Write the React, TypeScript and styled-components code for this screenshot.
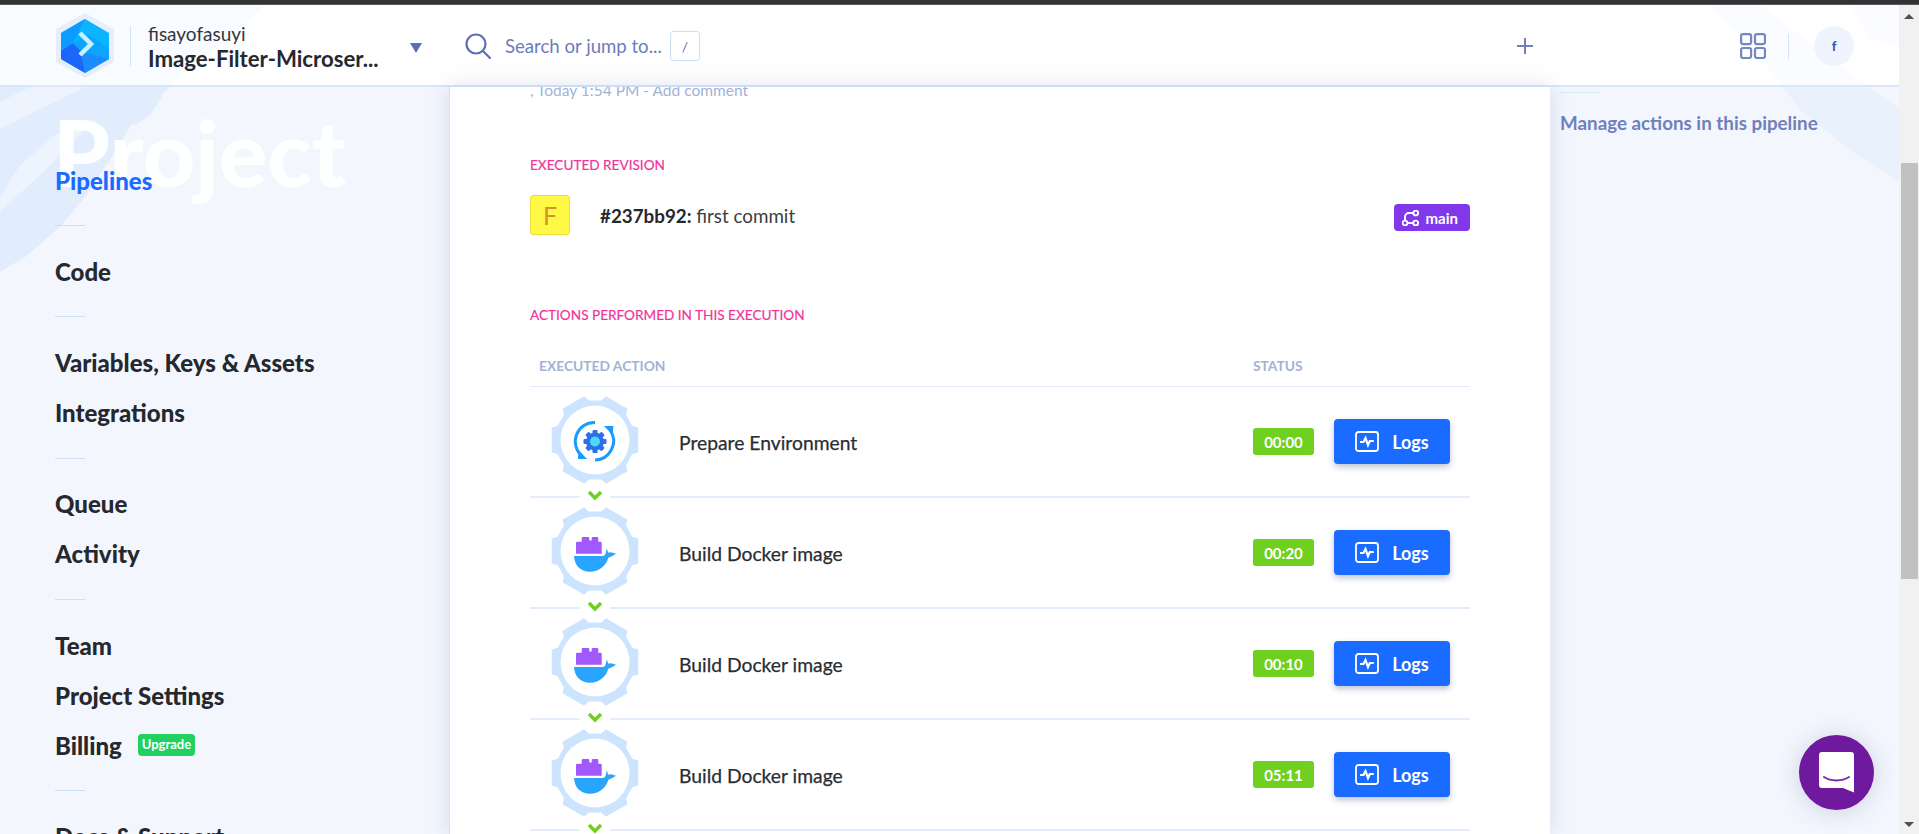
import React from "react";
import styled, { createGlobalStyle } from "styled-components";

const GlobalStyle = createGlobalStyle`
  html, body {
    margin: 0;
    height: 100%;
    overflow: hidden;
    font-family: "Lato", "Liberation Sans", sans-serif;
  }
  * { box-sizing: border-box; }
`;

const gearPath = () => {
  const pts: string[] = [];
  const rad = (d: number) => (d * Math.PI) / 180;
  for (let i = 0; i < 6; i++) {
    const a = i * 60;
    [
      [a - 21, 40],
      [a - 16, 45],
      [a + 16, 45],
      [a + 21, 40],
    ].forEach(([d, r]) => {
      pts.push(`${(45 + r * Math.cos(rad(d))).toFixed(1)},${(45 + r * Math.sin(rad(d))).toFixed(1)}`);
    });
  }
  return pts.join(" ");
};

const GEAR_POINTS = gearPath();

const Logo = () => (
  <svg width="60" height="66" viewBox="0 0 60 66">
    <polygon points="30,0 59,16 59,49 30,65 1,49 1,16" fill="#e6edfb" />
    <polygon points="30,6 54,20 54,46 30,60 6,46 6,20" fill="#0ab4ff" />
    <polygon points="30,6 6,20 6,38 18,30" fill="#0a9dff" />
    <polygon points="6,46 6,38 18,30 26,38 30,60" fill="#1c66fb" />
    <polygon points="26,38 54,46 30,60" fill="#1b8cff" />
    <polygon points="18,30 26,38 54,46 54,36 34,22" fill="#0ca4ff" />
    <polyline points="25,20 36,31 25,42" fill="none" stroke="#c9f1ff" strokeWidth="4.5" />
  </svg>
);

const SearchIcon = () => (
  <svg width="26" height="26" viewBox="0 0 26 26" fill="none" stroke="#5c6fb3" strokeWidth="2.2">
    <circle cx="11" cy="11" r="9.5" />
    <line x1="18" y1="18" x2="25" y2="25" strokeLinecap="round" />
  </svg>
);

const PlusIcon = () => (
  <svg width="16" height="16" viewBox="0 0 16 16" stroke="#6f80bb" strokeWidth="2">
    <line x1="8" y1="0" x2="8" y2="16" />
    <line x1="0" y1="8" x2="16" y2="8" />
  </svg>
);

const GridIcon = () => (
  <svg width="26" height="26" viewBox="0 0 26 26" fill="none" stroke="#7487bf" strokeWidth="2.2">
    <rect x="1.1" y="1.1" width="10" height="10" rx="2" />
    <rect x="15" y="1.1" width="10" height="10" rx="2" />
    <rect x="1.1" y="15" width="10" height="10" rx="2" />
    <rect x="15" y="15" width="10" height="10" rx="2" />
  </svg>
);

const BranchIcon = () => (
  <svg width="17" height="16" viewBox="0 0 17 16" fill="none" stroke="#fff" strokeWidth="1.9">
    <circle cx="13.7" cy="3" r="2.4" />
    <circle cx="3" cy="13" r="2.4" />
    <circle cx="13.7" cy="13" r="2.4" />
    <path d="M3 10.600V7a4 4 0 0 1 4-4h4.300" />
    <line x1="5.400" y1="13" x2="11.300" y2="13" />
  </svg>
);

const PulseIcon = () => (
  <svg width="24" height="21" viewBox="0 0 24 21" fill="none" stroke="#fff">
    <rect x="1" y="1" width="22" height="19" rx="2.5" strokeWidth="1.800" />
    <path d="M5 11h3.500l2-4 2.500 7 1.800-4h4" strokeWidth="2.200" />
  </svg>
);

const PrepareGlyph = () => (
  <g>
    <path d="M45 27.500A19 19 0 0 0 32 61" fill="none" stroke="#1a9bff" strokeWidth="3" />
    <path d="M45 65A19 19 0 0 0 60 35" fill="none" stroke="#1a9bff" strokeWidth="3" />
    <polygon points="28,64 37,64 28.300,55" fill="#1a9bff" />
    <polygon points="54,31 63.500,31 62.500,40" fill="#1a9bff" />
    <circle cx="45" cy="46.500" r="9" fill="#2c6fe8" />
    <g fill="#2c6fe8">
      {[0, 45, 90, 135].map((a) => (
        <rect key={a} x="42.500" y="35" width="5" height="23" rx="1" transform={`rotate(${a} 45 46.500)`} />
      ))}
    </g>
    <circle cx="45" cy="46.500" r="5" fill="#4fd8f5" />
  </g>
);

const DockerGlyph = () => (
  <g>
    <path
      d="M26 47.700V37q0-1.300 1.300-1.300H31.700V32q0-1 1-1H38.300q1 0 1 1V34.500H41.700V32q0-1 1-1H47.300q1 0 1 1V35.700H50.700q1 0 1 1V47.700z"
      fill="#a259fb"
    />
    <path
      d="M24 50H53C55 50 56 48 56.700 42.300L58.300 46.700C60 45.500 63 46.500 66 47.700C63 50 60 51 58.300 51.700C56 60 49 65.700 40 65.700C30 65.700 24.500 59 24 50z"
      fill="#2aa5ff"
    />
  </g>
);

const ACTIONS = [
  { name: "Prepare Environment", time: "00:00", glyph: <PrepareGlyph /> },
  { name: "Build Docker image", time: "00:20", glyph: <DockerGlyph /> },
  { name: "Build Docker image", time: "00:10", glyph: <DockerGlyph /> },
  { name: "Build Docker image", time: "05:11", glyph: <DockerGlyph /> },
];

const NAV_GROUPS = [
  ["Pipelines"],
  ["Code"],
  ["Variables, Keys & Assets", "Integrations"],
  ["Queue", "Activity"],
  ["Team", "Project Settings", "Billing"],
  ["Docs & Support"],
];

const App = () => {
  return (
    <>
      <GlobalStyle />
      <Shell>
        <TopStrip />
        <Frame>
          <Page>
            <Header>
              <BackArt viewBox="0 0 1899 80" preserveAspectRatio="none">
                <polygon points="0,0 266,0 220,40 170,80 0,80" fill="#f8fbff" />
                <polygon points="1710,0 1760,0 1867,80 1783,80" fill="#fafcff" />
                <polygon points="1850,0 1899,0 1899,40 1870,35" fill="#fbfcff" />
              </BackArt>
              <Brand>
                <Logo />
                <HeaderRule />
                <BrandText>
                  <Owner>fisayofasuyi</Owner>
                  <ProjectName>Image-Filter-Microser...</ProjectName>
                </BrandText>
                <Caret />
              </Brand>
              <SearchBox>
                <SearchIcon />
                <SearchText>Search or jump to...</SearchText>
                <Kbd>/</Kbd>
              </SearchBox>
              <HeaderRight>
                <AddButton>
                  <PlusIcon />
                </AddButton>
                <GridIcon />
                <HeaderRuleSmall />
                <UserCircle>f</UserCircle>
              </HeaderRight>
            </Header>
            <Columns>
              <BackArt viewBox="0 0 1899 747" preserveAspectRatio="none">
                <polygon points="0,0 170,0 150,18 130,40 115,65 85,110 60,140 25,170 0,185" fill="#e1edfd" />
                <polygon points="0,15 30,0 85,0 40,22 0,42" fill="#edf4fe" />
                <polygon points="0,110 20,78 55,48 95,32 70,58 40,88 0,125" fill="#edf4fe" />
                <polygon points="125,22 163,8 150,28 135,38" fill="#e1edfd" />
                <polygon points="1783,0 1867,0 1899,21 1899,95 1850,63 1800,23" fill="#e8f1fc" />
              </BackArt>
              <Sidebar>
                <Watermark>Project</Watermark>
                {NAV_GROUPS.map((group, i) => (
                  <React.Fragment key={group[0]}>
                    {i > 0 && <NavRule />}
                    {group.map((item) => (
                      <NavItem key={item} $active={item === "Pipelines"}>
                        {item}
                        {item === "Billing" && <UpgradeBadge>Upgrade</UpgradeBadge>}
                      </NavItem>
                    ))}
                  </React.Fragment>
                ))}
              </Sidebar>
              <Main>
                <CommentLine>, Today 1:54 PM - Add comment</CommentLine>
                <SectionLabel $top={54} $gap={21}>EXECUTED REVISION</SectionLabel>
                <RevisionRow>
                  <CommitAvatar>F</CommitAvatar>
                  <CommitText>
                    <b>#237bb92:</b> first commit
                  </CommitText>
                  <BranchBadge>
                    <BranchIcon />
                    main
                  </BranchBadge>
                </RevisionRow>
                <SectionLabel $top={71} $gap={25}>ACTIONS PERFORMED IN THIS EXECUTION</SectionLabel>
                <TableHead>
                  <HeadCell>EXECUTED ACTION</HeadCell>
                  <StatusCell>STATUS</StatusCell>
                </TableHead>
                {ACTIONS.map((action, i) => (
                  <ActionRow key={i}>
                    <GearBox>
                      <svg width="90" height="90" viewBox="0 0 90 90">
                        <polygon points={GEAR_POINTS} fill="#cce4fd" />
                        <circle cx="45" cy="45" r="34.500" fill="#fff" />
                        {action.glyph}
                      </svg>
                    </GearBox>
                    <ActionName>{action.name}</ActionName>
                    <TimeBadge>{action.time}</TimeBadge>
                    <LogsButton>
                      <PulseIcon />
                      Logs
                    </LogsButton>
                    <Connector>
                      <svg width="16" height="11" viewBox="0 0 16 11">
                        <polyline points="2,2 8,8 14,2" fill="none" stroke="#6fd020" strokeWidth="3.500" />
                      </svg>
                    </Connector>
                  </ActionRow>
                ))}
              </Main>
              <RightPanel>
                <PanelRule />
                <PanelLink>Manage actions in this pipeline</PanelLink>
              </RightPanel>
            </Columns>
            <ChatBubble>
              <svg width="36" height="41" viewBox="0 0 36 41">
                <path d="M3 0h29a3 3 0 0 1 3 3v37.500L24 36H3a3 3 0 0 1-3-3V3a3 3 0 0 1 3-3z" fill="#fff" />
                <path d="M5 25c7 4.500 18 4.500 25 0" fill="none" stroke="#7a2aa8" strokeWidth="2" strokeLinecap="round" />
              </svg>
            </ChatBubble>
          </Page>
          <ScrollTrack>
            <ArrowUp />
            <ThumbArea>
              <Thumb />
            </ThumbArea>
            <ArrowDown />
          </ScrollTrack>
        </Frame>
      </Shell>
    </>
  );
};

export default App;

const Shell = styled.div`
  display: flex;
  flex-direction: column;
  width: 1919px;
  height: 834px;
  overflow: hidden;
`;

const TopStrip = styled.div`
  height: 5px;
  flex: none;
  background: #333333;
  border-bottom: 1px solid #5a5a5a;
`;

const Frame = styled.div`
  display: flex;
  flex: 1;
  min-height: 0;
`;

const Page = styled.div`
  position: relative;
  display: flex;
  flex-direction: column;
  flex: 1;
  min-width: 0;
  background: #f3f6fd;
  overflow: hidden;
`;

const BackArt = styled.svg`
  position: absolute;
  inset: 0;
  z-index: -1;
  width: 100%;
  height: 100%;
`;

const Header = styled.header`
  position: relative;
  isolation: isolate;
  display: flex;
  align-items: center;
  flex: none;
  height: 82px;
  padding: 2px 45px 0 55px;
  background: #fff;
  border-bottom: 2px solid #d9e7fb;
`;

const Brand = styled.div`
  display: flex;
  align-items: center;
  width: 410px;
`;

const HeaderRule = styled.div`
  width: 1px;
  height: 40px;
  margin: 0 17px 0 15px;
  background: #d5e3f8;
`;

const BrandText = styled.div`
  display: flex;
  flex-direction: column;
  gap: 1px;
  width: 262px;
`;

const Owner = styled.div`
  font-size: 19px;
  line-height: 23px;
  color: #33363c;
`;

const ProjectName = styled.div`
  font-size: 22.200px;
  line-height: 25px;
  font-weight: 700;
  color: #25282e;
  white-space: nowrap;
`;

const Caret = styled.div`
  width: 0;
  height: 0;
  margin-top: 4px;
  border-left: 6px solid transparent;
  border-right: 6px solid transparent;
  border-top: 10px solid #5c6fb3;
`;

const SearchBox = styled.div`
  display: flex;
  align-items: center;
`;

const SearchText = styled.span`
  margin: 0 8px 0 14px;
  font-size: 18.600px;
  color: #6b7dbb;
`;

const Kbd = styled.span`
  display: flex;
  align-items: center;
  justify-content: center;
  width: 30px;
  height: 30px;
  font-size: 14px;
  color: #5c6fb3;
  background: #fff;
  border: 1px solid #cdddf8;
  border-radius: 3px;
`;

const HeaderRight = styled.div`
  display: flex;
  align-items: center;
  margin-left: auto;
`;

const AddButton = styled.div`
  display: flex;
  margin-right: 207px;
`;

const HeaderRuleSmall = styled.div`
  width: 1px;
  height: 25px;
  margin: 0 25px 0 22px;
  background: #d5e3f8;
`;

const UserCircle = styled.div`
  display: flex;
  align-items: center;
  justify-content: center;
  width: 40px;
  height: 40px;
  border-radius: 50%;
  font-size: 13px;
  font-weight: 900;
  color: #3d5aa8;
  background: #eff4fe;
`;

const Columns = styled.div`
  position: relative;
  isolation: isolate;
  display: flex;
  flex: 1;
  min-height: 0;
`;

const Sidebar = styled.nav`
  position: relative;
  width: 449px;
  flex: none;
  padding: 68px 0 0 55px;
  overflow: hidden;
`;

const Watermark = styled.div`
  position: absolute;
  left: 53px;
  top: 10px;
  font-size: 91px;
  line-height: 110px;
  font-weight: 900;
  color: rgba(255, 255, 255, 0.92);
`;

const NavItem = styled.div<{ $active?: boolean }>`
  position: relative;
  display: flex;
  align-items: center;
  height: 50px;
  font-size: 24px;
  font-weight: 900;
  white-space: nowrap;
  color: ${(p) => (p.$active ? "#1a6bff" : "#25282e")};
`;

const UpgradeBadge = styled.span`
  margin-left: 16px;
  padding: 0 4px;
  height: 22px;
  line-height: 21px;
  font-size: 13px;
  font-weight: 700;
  color: #fff;
  background: #21d05e;
  border-radius: 4px;
`;

const NavRule = styled.div`
  width: 30px;
  height: 1px;
  margin: 20px 0 20.250px;
  background: #cfdff8;
`;

const Main = styled.main`
  position: relative;
  width: 1101px;
  flex: none;
  padding: 0 80px;
  background: #fff;
  border-left: 1px solid #d9e2f3;
  box-shadow: 0 0 20px rgba(120, 140, 190, 0.25);
  overflow: hidden;
`;

const CommentLine = styled.div`
  margin-top: -9px;
  font-size: 15.500px;
  line-height: 24px;
  color: #9fb3d4;
`;

const SectionLabel = styled.div<{ $top: number; $gap: number }>`
  margin: ${(p) => p.$top}px 0 ${(p) => p.$gap}px;
  font-size: 13.600px;
  line-height: 18px;
  color: #f0359a;
  -webkit-text-stroke: 0.2px #f0359a;
`;

const RevisionRow = styled.div`
  display: flex;
  align-items: center;
  height: 40px;
`;

const CommitAvatar = styled.div`
  display: flex;
  align-items: center;
  justify-content: center;
  width: 40px;
  height: 40px;
  margin-right: 30px;
  font-size: 25px;
  color: #d39526;
  background: #fff945;
  border: 1px solid #e8dd3d;
  border-radius: 3px;
`;

const CommitText = styled.div`
  font-size: 18.800px;
  color: #3a3d42;

  b {
    font-weight: 700;
    color: #25282e;
  }
`;

const BranchBadge = styled.div`
  display: flex;
  align-items: center;
  gap: 7px;
  height: 27px;
  margin: 5px 0 0 auto;
  padding: 0 12px 0 8px;
  font-size: 15px;
  font-weight: 700;
  color: #fff;
  background: #8138ea;
  border-radius: 4px;
`;

const TableHead = styled.div`
  display: flex;
  align-items: center;
  height: 38px;
  padding: 0 0 5px 9px;
  border-bottom: 1px solid #e4ebf8;
  font-size: 13.800px;
  font-weight: 700;
  color: #9fb3d4;
`;

const HeadCell = styled.div`
  width: 714px;
`;

const StatusCell = styled.div``;

const ActionRow = styled.div`
  position: relative;
  display: flex;
  align-items: center;
  height: 111px;
  padding: 0 20px;
  border-bottom: 2px solid #e4eefb;
`;

const GearBox = styled.div`
  display: flex;
  width: 90px;
  margin: -4px 39px 0 0;
`;

const ActionName = styled.div`
  flex: 1;
  padding-top: 1px;
  font-size: 19.300px;
  color: #2a2d33;
  -webkit-text-stroke: 0.25px #2a2d33;
`;

const TimeBadge = styled.div`
  display: flex;
  align-items: center;
  justify-content: center;
  width: 61px;
  height: 27px;
  margin-right: 20px;
  font-size: 15px;
  font-weight: 700;
  color: #fff;
  background: #6fd020;
  border-radius: 3px;
`;

const LogsButton = styled.div`
  display: flex;
  align-items: center;
  justify-content: center;
  gap: 13px;
  width: 116px;
  height: 45px;
  font-size: 18px;
  font-weight: 700;
  color: #fff;
  background: #1a6bff;
  border-radius: 4px;
  box-shadow: 0 3px 6px rgba(40, 60, 120, 0.3);
`;

const Connector = styled.div`
  position: absolute;
  left: 50px;
  bottom: -6px;
  display: flex;
  justify-content: center;
  width: 30px;
  height: 14px;
  padding-top: 2px;
  background: #fff;
`;

const RightPanel = styled.aside`
  flex: 1;
  padding: 5px 0 0 10px;
`;

const PanelRule = styled.div`
  width: 40px;
  height: 1px;
  background: #dfe8f8;
`;

const PanelLink = styled.div`
  margin-top: 18px;
  font-size: 18.800px;
  line-height: 24px;
  font-weight: 700;
  color: #6f80bb;
`;

const ChatBubble = styled.div`
  position: absolute;
  right: 25px;
  bottom: 24px;
  display: flex;
  align-items: center;
  justify-content: center;
  width: 75px;
  height: 75px;
  border-radius: 50%;
  background: #6f199e;
  box-shadow: 0 2px 24px rgba(60, 70, 120, 0.2);
`;

const ScrollTrack = styled.div`
  display: flex;
  flex-direction: column;
  align-items: center;
  flex: none;
  width: 20px;
  background: #f1f1f1;
`;

const ArrowUp = styled.div`
  width: 0;
  height: 0;
  margin: 9px 0 7px;
  border-left: 5px solid transparent;
  border-right: 5px solid transparent;
  border-bottom: 5px solid #505050;
`;

const ArrowDown = styled.div`
  width: 0;
  height: 0;
  margin: 7px 0 7px;
  border-left: 5px solid transparent;
  border-right: 5px solid transparent;
  border-top: 5px solid #505050;
`;

const ThumbArea = styled.div`
  flex: 1;
  width: 100%;
  padding: 137px 1px 0 2px;
`;

const Thumb = styled.div`
  height: 416px;
  background: #c1c1c1;
`;
